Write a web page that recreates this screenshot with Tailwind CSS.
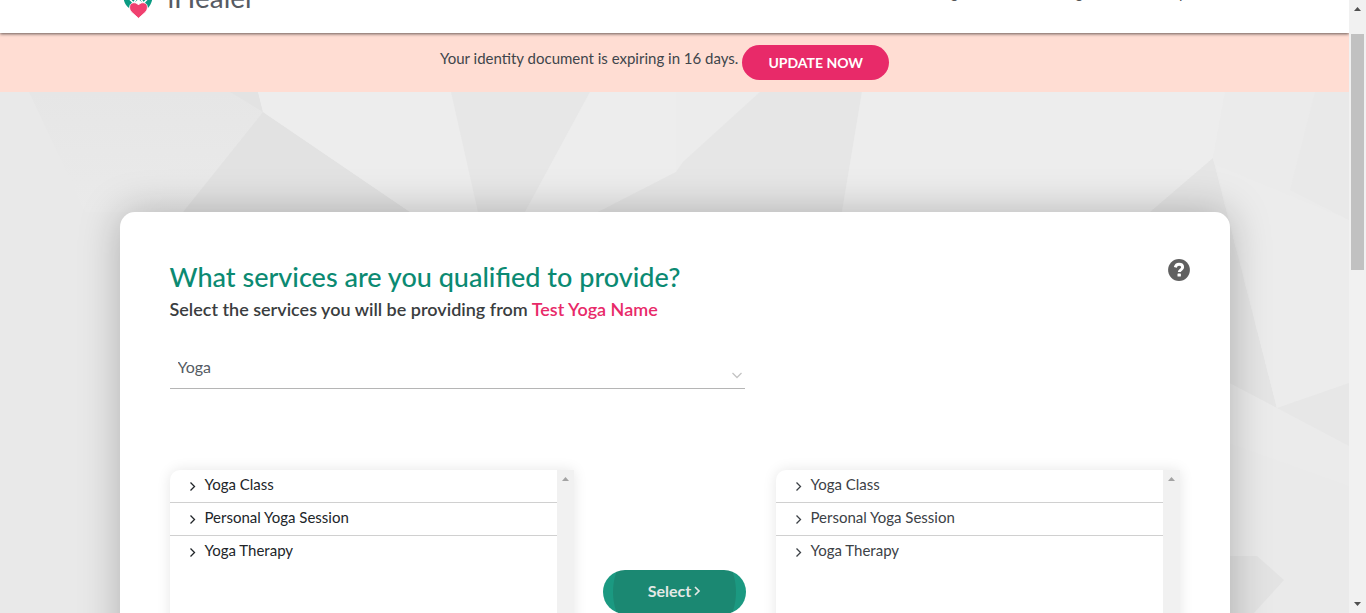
<!DOCTYPE html>
<html lang="en">
<head>
<meta charset="utf-8">
<meta name="viewport" content="width=device-width, initial-scale=1">
<title>iHealer – Services</title>
<script src="https://cdn.jsdelivr.net/npm/@tailwindcss/browser@4"></script>
</head>
<body class="flex h-screen overflow-hidden bg-white font-['Lato','Open_Sans',sans-serif] text-[#40454b]">
<div class="flex min-w-0 flex-1 flex-col overflow-hidden">

  <header class="relative z-10 h-[33px] shrink-0 bg-white shadow-[0_1px_3px_rgba(0,0,0,0.6)]">
    <div class="h-full overflow-hidden">
      <div class="mx-auto -mt-8 flex w-full max-w-[1110px] items-start justify-between px-1">
        <a href="#" class="flex items-start gap-4" aria-label="iHealer">
          <svg class="mt-4 h-[35px] w-7" viewBox="0 0 28 35" aria-hidden="true">
            <path d="M0 8h28v8.500c-.8 3-2 5.200-4 7.500L14.500 15 5 24c-2.500-2-4.200-4.500-5-7.500z" fill="#0a9b82"/>
            <path d="M6 15.500l3.500 3.500 2.500-3.500M17 15.500l2.500 3.500 3.500-3.500" fill="none" stroke="#fff" stroke-width="1.500"/>
            <path d="M14.500 34.300 7.500 28C4.800 25 5 20.700 7.800 19.200c2.300-1.100 5.200-.4 6.700 1.800 1.500-2.200 4.400-2.900 6.700-1.800 2.800 1.500 3 5.800.3 8.800z" fill="#f0406f" stroke="#fff" stroke-width=".8"/>
          </svg>
          <span class="mt-2 text-[28px] leading-[42px] text-[#565b63]">iHealer</span>
        </a>
        <nav class="mt-3 flex pr-[38px] text-[15px] leading-6 text-[#555]">
          <a href="#" class="mr-[117px]">g</a><a href="#" class="mr-24">g</a><a href="#">p</a>
        </nav>
      </div>
    </div>
  </header>

  <div class="flex h-[59px] shrink-0 items-start justify-center gap-1 bg-[#ffddd3] pt-3 pr-5">
    <p class="text-[15px] leading-[26px]">Your identity document is expiring in 16 days.</p>
    <button type="button" class="h-[35px] rounded-full bg-[#e82a69] px-[26px] text-[14px] font-bold text-white">UPDATE NOW</button>
  </div>

  <main class="relative flex min-h-0 flex-1 flex-col bg-[#ebebeb] pt-[120px]">
    <svg class="absolute inset-0 h-full w-full" viewBox="0 92 1349 521" preserveAspectRatio="xMidYMin slice" aria-hidden="true">
      <defs>
        <linearGradient id="fade" x1="0" y1="0" x2="0" y2="1">
          <stop offset="0" stop-color="#e6e6e6"/>
          <stop offset="1" stop-color="#eaeaea"/>
        </linearGradient>
      </defs>
      <path fill="#e9e9e9" d="M0 92H130V613H0z"/>
      <path fill="url(#fade)" d="M29 92H258L264 112 183 212H85z"/>
      <path fill="#e3e3e3" d="M230 92H258L263 112z"/>
      <path fill="#e2e2e2" d="M263 112 410 212H183z"/>
      <path fill="#ededed" d="M258 92H451L478 212 410 212 263 112z"/>
      <path fill="#e7e7e7" d="M451 92H590L525 212H478z"/>
      <path fill="#ededed" d="M590 92H676V172L598 212H525z"/>
      <path fill="#ececec" d="M676 92H760L683 162 676 172z"/>
      <path fill="#e6e6e6" d="M760 92H862L842 212H598L676 172 683 162z"/>
      <path fill="#ededed" d="M862 92H1225L1213 158 1150 212H842z"/>
      <path fill="#e5e5e5" d="M1213 158 1277 408 1220 378 1150 212z"/>
      <path fill="#ebebeb" d="M1225 92H1349V383L1277 408 1213 158z"/>
      <path fill="#e9e9e9" d="M1315 92H1349V220L1290 190z"/>
      <path fill="#ececec" d="M1216 165 1349 220V383L1277 408z"/>
      <path fill="#e7e7e7" d="M1277 408 1349 383V446z"/>
      <path fill="#eaeaea" d="M1220 440 1349 486V613H1220z"/>
      <path fill="#e3e3e3" d="M1220 556H1257L1284 580 1254 613H1220z"/>
    </svg>

    <section class="relative mx-auto w-full max-w-[1110px] flex-1 rounded-[15px] bg-white px-[50px] pt-[46px] shadow-[0_0_40px_rgba(0,0,0,0.25)]">
      <div class="flex items-start justify-between">
        <div>
          <h1 class="text-[27px] leading-[38px] font-medium text-[#0b8a72]">What services are you qualified to provide?</h1>
          <p class="text-[18px] leading-[26px] font-semibold text-[#3a3d40]">Select the services you will be providing from <span class="text-[#e82a69]">Test Yoga Name</span></p>
        </div>
        <button type="button" aria-label="Help" class="-mr-[10px] mt-[1px]">
          <svg class="h-[22px] w-[22px]" viewBox="0 0 22 22" aria-hidden="true">
            <circle cx="11" cy="11" r="10.900" fill="#606060"/>
            <path d="M7.300 8.400C7.800 6.200 9.200 5.300 11 5.300c2.200 0 3.600 1.200 3.600 2.900 0 2.700-3.300 2.600-3.300 4.900" fill="none" stroke="#fff" stroke-width="3"/>
            <rect x="9.500" y="14.400" width="3.400" height="3.200" rx=".6" fill="#fff"/>
          </svg>
        </button>
      </div>

      <div class="relative mt-8 w-[57%]">
        <select aria-label="Service category" class="h-[35px] w-full appearance-none border-b border-[#b5b5b5] bg-transparent px-2 pb-2 text-[16px] text-[#555b63]">
          <option>Yoga</option>
        </select>
        <svg class="pointer-events-none absolute right-[2px] bottom-2 h-3 w-3" viewBox="0 0 12 12" fill="none" stroke="#c4c4c4" stroke-width="1.300" aria-hidden="true"><path d="m1.500 4 4.500 4.500L10.500 4"/></svg>
      </div>

      <div class="mt-[81px] flex items-start">
        <div class="flex h-[220px] w-[40%] overflow-hidden rounded-l-[10px] shadow-[0_0_14px_rgba(0,0,0,0.1)]">
          <ul class="flex-1 divide-y divide-[#d0d0d0] text-[15px] text-[#212529]">
            <li><button type="button" class="flex h-8 w-full items-center gap-2 px-[18px] pb-1"><svg class="mt-1 h-[9px] w-[9px]" viewBox="0 0 9 9" fill="none" stroke="currentColor" stroke-width="1.300" aria-hidden="true"><path d="m2.500.5 4 4-4 4"/></svg>Yoga Class</button></li>
            <li><button type="button" class="flex h-8 w-full items-center gap-2 px-[18px] pb-1"><svg class="mt-1 h-[9px] w-[9px]" viewBox="0 0 9 9" fill="none" stroke="currentColor" stroke-width="1.300" aria-hidden="true"><path d="m2.500.5 4 4-4 4"/></svg>Personal Yoga Session</button></li>
            <li><button type="button" class="flex h-8 w-full items-center gap-2 px-[18px] pb-1"><svg class="mt-1 h-[9px] w-[9px]" viewBox="0 0 9 9" fill="none" stroke="currentColor" stroke-width="1.300" aria-hidden="true"><path d="m2.500.5 4 4-4 4"/></svg>Yoga Therapy</button></li>
          </ul>
          <div class="flex w-[17px] justify-center bg-[#f1f1f1] pt-[7px]"><svg class="h-1 w-[7px]" viewBox="0 0 7 4" fill="#a3a3a3" aria-hidden="true"><path d="M0 4 3.500 0 7 4z"/></svg></div>
        </div>
        <div class="flex w-[20%] justify-center pt-[100px]">
          <button type="button" class="flex h-11 w-[143px] items-center justify-center gap-[2px] rounded-full bg-[radial-gradient(circle_at_center,#1b8872_61px,#1b9981_62px)] pb-[3px] text-[16px] font-bold text-[#e4e8e6]">Select<svg class="mt-[1px] h-[10px] w-2" viewBox="0 0 8 10" fill="none" stroke="currentColor" stroke-width="1.700" aria-hidden="true"><path d="m2 1 4 4-4 4"/></svg></button>
        </div>
        <div class="flex h-[220px] w-[40%] overflow-hidden rounded-l-[10px] shadow-[0_0_14px_rgba(0,0,0,0.1)]">
          <ul class="flex-1 divide-y divide-[#d0d0d0] text-[15px] text-[#3c4146]">
            <li><button type="button" class="flex h-8 w-full items-center gap-2 px-[18px] pb-1"><svg class="mt-1 h-[9px] w-[9px]" viewBox="0 0 9 9" fill="none" stroke="currentColor" stroke-width="1.300" aria-hidden="true"><path d="m2.500.5 4 4-4 4"/></svg>Yoga Class</button></li>
            <li><button type="button" class="flex h-8 w-full items-center gap-2 px-[18px] pb-1"><svg class="mt-1 h-[9px] w-[9px]" viewBox="0 0 9 9" fill="none" stroke="currentColor" stroke-width="1.300" aria-hidden="true"><path d="m2.500.5 4 4-4 4"/></svg>Personal Yoga Session</button></li>
            <li><button type="button" class="flex h-8 w-full items-center gap-2 px-[18px] pb-1"><svg class="mt-1 h-[9px] w-[9px]" viewBox="0 0 9 9" fill="none" stroke="currentColor" stroke-width="1.300" aria-hidden="true"><path d="m2.500.5 4 4-4 4"/></svg>Yoga Therapy</button></li>
          </ul>
          <div class="flex w-[17px] justify-center bg-[#f1f1f1] pt-[7px]"><svg class="h-1 w-[7px]" viewBox="0 0 7 4" fill="#a3a3a3" aria-hidden="true"><path d="M0 4 3.500 0 7 4z"/></svg></div>
        </div>
      </div>
    </section>
  </main>
</div>

<div class="flex w-[17px] shrink-0 flex-col items-center bg-[#f1f1f1] py-[7px]" aria-hidden="true">
  <svg class="h-1 w-[7px] shrink-0" viewBox="0 0 7 4" fill="#505050"><path d="M0 4 3.500 0 7 4z"/></svg>
  <div class="mt-[23px] h-[236px] w-[13px] shrink-0 bg-[#c1c1c1]"></div>
  <svg class="mt-auto h-1 w-[7px] shrink-0" viewBox="0 0 7 4" fill="#505050"><path d="M0 0 3.500 4 7 0z"/></svg>
</div>
</body>
</html>
